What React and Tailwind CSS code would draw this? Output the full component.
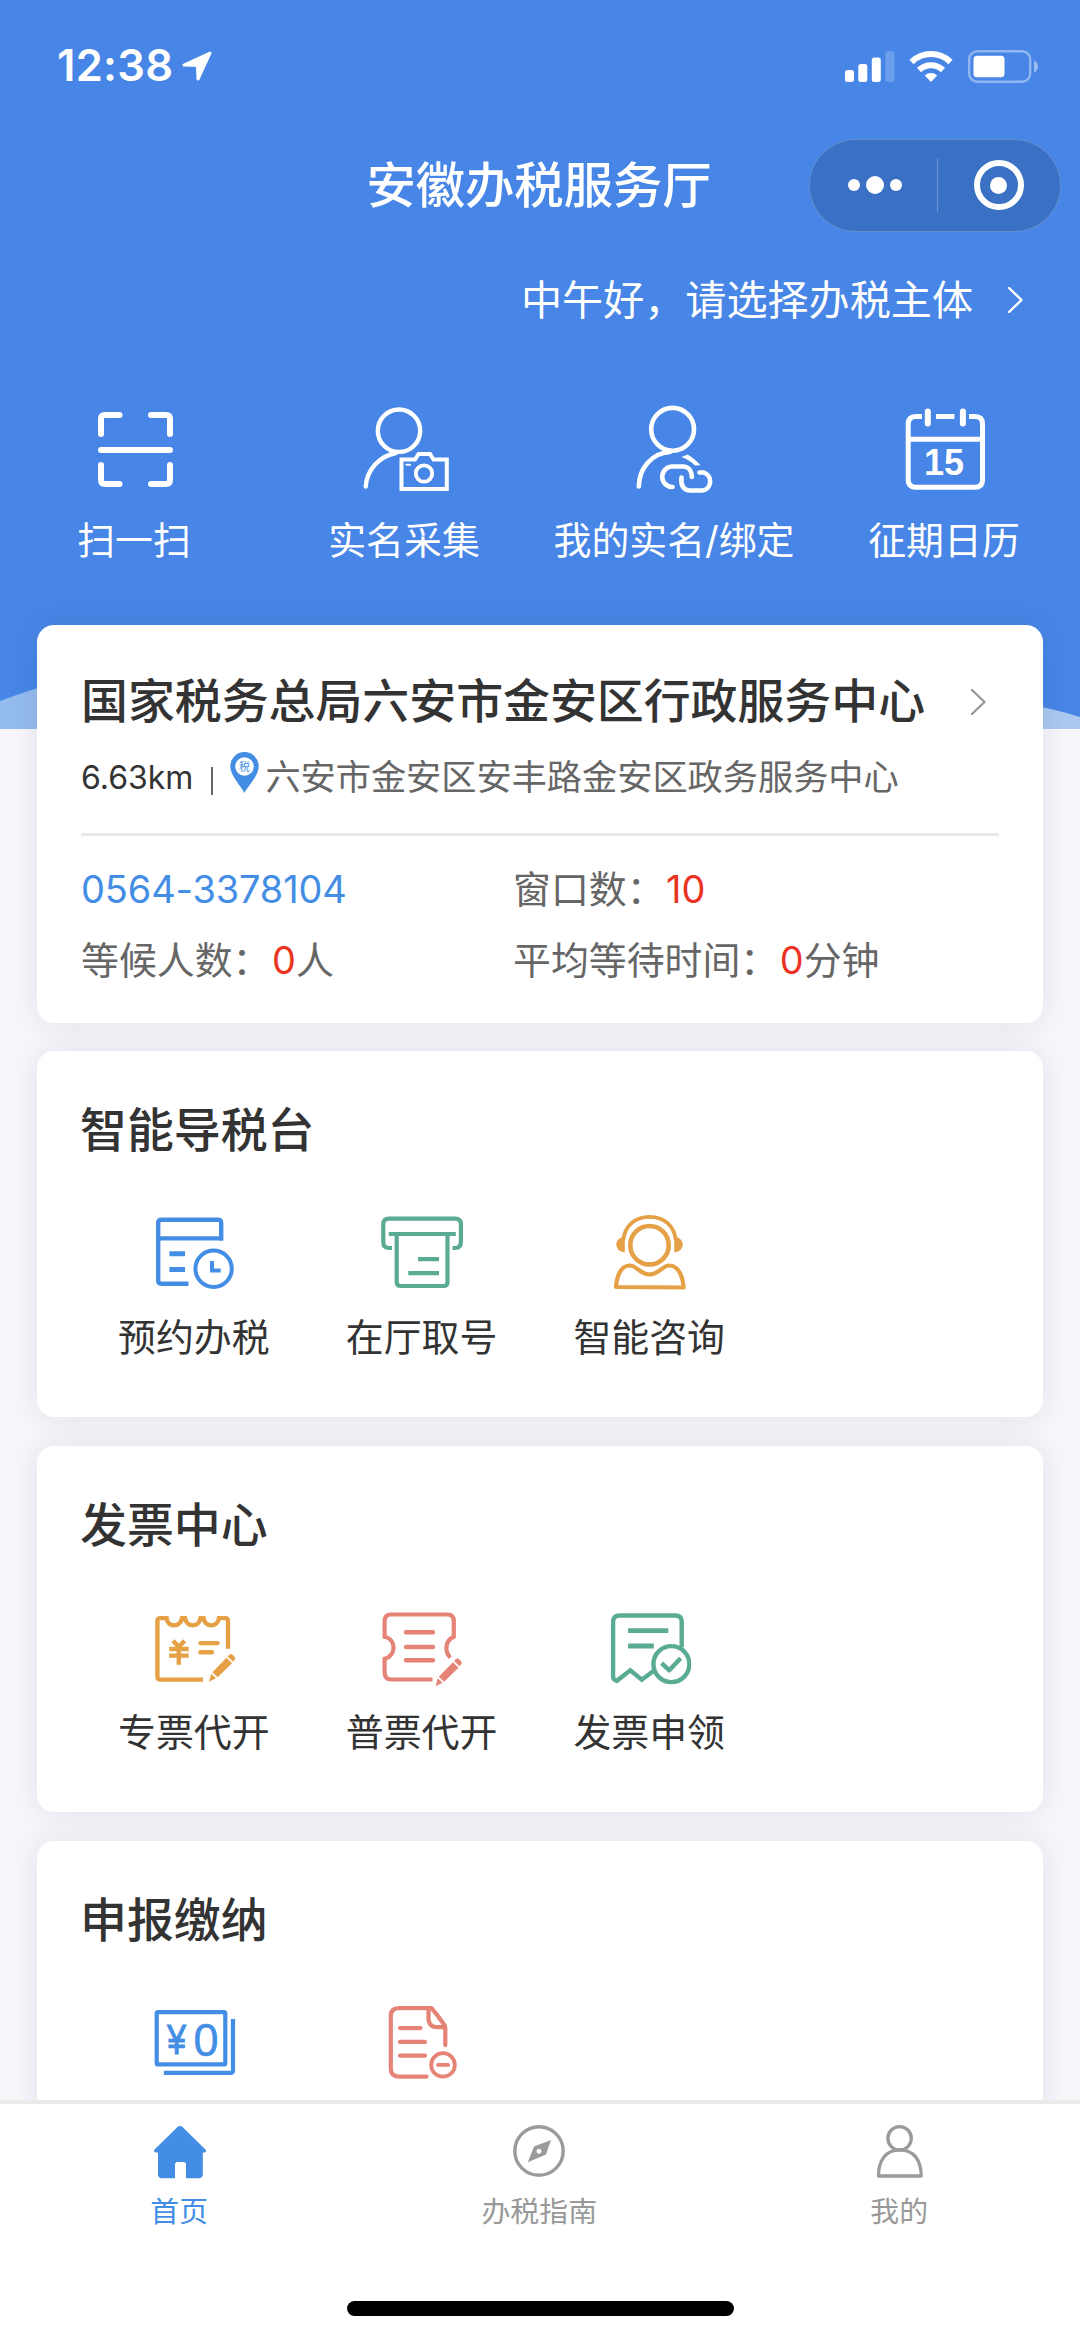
import React from "react";

const BLUE = "#438ee4";
const GREEN = "#5aab94";
const ORANGE = "#e6a045";
const RED = "#e58377";

function Chevron({ className }) {
  return (
    <svg viewBox="0 0 18 30" className={className} fill="none" stroke="currentColor" strokeWidth="2.400" strokeLinecap="round" strokeLinejoin="round">
      <path d="M3 3 L15.500 15 L3 27" />
    </svg>
  );
}

function StatusBar() {
  return (
    <div className="flex h-[132px] items-center justify-between pl-[57px] pr-[41px] text-white">
      <div className="flex items-center gap-[9px]">
        <span className="font-[Inter] text-[43.500px] font-semibold leading-none tracking-[0.300px]">12:38</span>
        <svg viewBox="0 0 30 30" className="h-[30px] w-[30px]" fill="#fff" stroke="#fff" strokeWidth="3" strokeLinejoin="round">
          <path d="M28 2 L2 14 L15.500 14.500 L16 28 Z" />
        </svg>
      </div>
      <div className="flex items-center">
        <svg viewBox="0 0 50 32" className="h-[32px] w-[50px]" fill="#fff">
          <rect x="0" y="20" width="9" height="12" rx="2.500" />
          <rect x="13.300" y="14" width="9" height="18" rx="2.500" />
          <rect x="26.800" y="7.500" width="9" height="24.500" rx="2.500" />
          <rect x="40.500" y="1" width="9" height="31" rx="2.500" opacity="0.2" />
        </svg>
        <svg viewBox="0 0 44 32" className="ml-[14px] h-[32px] w-[44px]" fill="none" stroke="#fff" strokeWidth="6">
          <path d="M2.500 12 A28 28 0 0 1 41.500 12" />
          <path d="M10 20 A17.500 17.500 0 0 1 34 20" />
          <path d="M15.800 25.500 A9 9 0 0 1 28.200 25.500 L22 32 Z" fill="#fff" stroke="none" />
        </svg>
        <svg viewBox="0 0 71 33" className="ml-[15px] h-[33px] w-[71px]">
          <rect x="1.200" y="1.200" width="61" height="30.600" rx="8" fill="none" stroke="#fff" strokeOpacity="0.4" strokeWidth="2.400" />
          <rect x="5.500" y="5.800" width="31" height="21.400" rx="3.500" fill="#fff" />
          <path d="M66 10.500 Q70 12.500 70 16.500 Q70 20.500 66 22.500 Z" fill="#fff" fillOpacity="0.45" />
        </svg>
      </div>
    </div>
  );
}

function TitleBar() {
  return (
    <div className="grid h-[106px] grid-cols-[1fr_auto_1fr] items-center">
      <div />
      <h1 className="-ml-[2px] mt-[2px] whitespace-nowrap text-[49.300px] font-medium leading-none text-white">安徽办税服务厅</h1>
      <div className="mr-[19px] flex h-[93px] w-[252px] items-center justify-self-end rounded-full border border-white/20 bg-[#3a71c4]">
        <div className="flex flex-1 items-center justify-center gap-[6px] pl-[4px]">
          <span className="h-[12px] w-[12px] rounded-full bg-white" />
          <span className="h-[18px] w-[18px] rounded-full bg-white" />
          <span className="h-[12px] w-[12px] rounded-full bg-white" />
        </div>
        <div className="h-[54px] w-px bg-white/25" />
        <div className="flex flex-1 items-center justify-center">
          <span className="flex h-[50px] w-[50px] items-center justify-center rounded-full border-[6px] border-white">
            <span className="h-[17px] w-[17px] rounded-full bg-white" />
          </span>
        </div>
      </div>
    </div>
  );
}

function ScanIcon() {
  return (
    <svg viewBox="87 402 96 96" className="h-[96px] w-[96px]" fill="none" stroke="#fff" strokeWidth="6" strokeLinecap="round">
      <path d="M101 434 V419 Q101 415 105 415 H119.500" />
      <path d="M151 415 H166 Q170 415 170 419 V434" />
      <path d="M170 465 V480 Q170 484 166 484 H151" />
      <path d="M119.500 484 H105 Q101 484 101 480 V465" />
      <path d="M101 450 H170" />
    </svg>
  );
}

function CameraUserIcon() {
  return (
    <svg viewBox="357 402 96 96" className="h-[96px] w-[96px]" fill="none" stroke="#fff" strokeWidth="4.400" strokeLinecap="round">
      <circle cx="399" cy="430.700" r="21.200" />
      <path d="M396 453 C380 456 367 469 365.700 486.500" />
      <path d="M401.500 459.500 H415 L418.500 454 H430 L433.500 459.500 H446.800 V489 H401.500 Z" strokeWidth="4" />
      <circle cx="424" cy="473.500" r="8.200" strokeWidth="3.800" />
      <path d="M406.500 464.800 H410" strokeWidth="2" />
    </svg>
  );
}

function LinkUserIcon() {
  return (
    <svg viewBox="627 402 96 96" className="h-[96px] w-[96px]" fill="none" stroke="#fff" strokeWidth="4.600" strokeLinecap="round">
      <circle cx="672.600" cy="429.300" r="21.400" />
      <path d="M670 452 C652 453 639 468 638.800 486.500" />
      <path d="M672.500 487 H671.500 A10.300 10.300 0 0 1 671.500 466.500 H683 C688.500 466.500 691.800 471 691.800 477" />
      <path d="M681.500 477.500 C680.500 485 683.500 490.500 690 490.500 H702 A9.200 9.200 0 0 0 703.500 472.500 H699.500" />
      <path d="M681.500 457 L687.500 454.500 Q694 458 700.500 465.300 L695 465.500 Q689 459.500 681.500 457 Z" fill="#fff" stroke="none" />
    </svg>
  );
}

function CalendarIcon() {
  return (
    <svg viewBox="897 402 96 96" className="h-[96px] w-[96px]" fill="none" stroke="#fff" strokeWidth="5">
      <path d="M922 416.500 H916 Q908.200 416.500 908.200 424 V480 Q908.200 487.300 916 487.300 H975 Q982.500 487.300 982.500 480 V424 Q982.500 416.500 975 416.500 H969" />
      <path d="M936 416.500 H954.500" />
      <path d="M908.200 439.200 H982.500" />
      <path d="M927.800 411.500 V423.500 M962.900 411.500 V423.500" strokeWidth="6" strokeLinecap="round" />
      <text x="944" y="475" textAnchor="middle" fill="#fff" stroke="none" fontFamily="Liberation Sans, sans-serif" fontWeight="700" fontSize="36">15</text>
    </svg>
  );
}

const quickActions = [
  { label: "扫一扫", Icon: ScanIcon },
  { label: "实名采集", Icon: CameraUserIcon },
  { label: "我的实名/绑定", Icon: LinkUserIcon },
  { label: "征期日历", Icon: CalendarIcon },
];

function Header() {
  return (
    <header className="relative h-[729px] bg-[#4786e6]">
      <StatusBar />
      <TitleBar />
      <div className="flex h-[124px] items-center justify-end pr-[56px] text-white">
        <span className="mt-[2px] text-[41.100px] font-normal leading-none">中午好，请选择办税主体</span>
        <Chevron className="ml-[33px] h-[30px] w-[18px]" />
      </div>
      <div className="mt-[40px] grid grid-cols-4">
        {quickActions.map(({ label, Icon }) => (
          <div key={label} className="flex flex-col items-center">
            <Icon />
            <span className="mt-[18px] -ml-[2px] whitespace-nowrap text-[37.900px] font-normal leading-[48px] text-white">{label}</span>
          </div>
        ))}
      </div>
      <svg viewBox="0 0 1080 60" className="absolute bottom-0 left-0 h-[60px] w-[1080px]">
        <path d="M0 32 Q18 25 60 12 H540 V60 H0 Z" fill="#94bbee" />
        <path d="M1000 31 Q1045 37 1080 48 V60 H1000 Z" fill="#abc8f1" />
      </svg>
    </header>
  );
}

function Card({ className, children }) {
  return (
    <section className={`rounded-[17px] bg-white shadow-[0_0_30px_rgba(40,30,60,0.1)] ${className}`}>{children}</section>
  );
}

function PinIcon() {
  return (
    <svg viewBox="0 0 29 41" className="h-[41px] w-[29px]">
      <path d="M14.500 41 C11 34 0.300 24 0.300 14.300 A14.200 14.200 0 0 1 28.700 14.300 C28.700 24 18 34 14.500 41 Z" fill={BLUE} />
      <circle cx="14.500" cy="14.500" r="9.300" fill="#fff" />
      <text x="14.500" y="18.600" textAnchor="middle" fill={BLUE} fontFamily="Noto Sans CJK SC, sans-serif" fontSize="11">税</text>
    </svg>
  );
}

function OfficeCard() {
  return (
    <Card className="relative h-[397.700px] px-[44px] pt-[44px]">
      <div className="flex h-[64px] items-center justify-between pr-[12px]">
        <h2 className="whitespace-nowrap text-[46.900px] font-medium leading-[64px] text-[#333]">国家税务总局六安市金安区行政服务中心</h2>
        <Chevron className="mt-[2px] h-[30px] w-[18px] text-[#999]" />
      </div>
      <div className="mt-[22px] flex h-[44px] items-center whitespace-nowrap leading-[44px] text-[#666]">
        <span className="mt-[2px] text-[32px] text-[#333]">6.63km</span>
        <span className="ml-[18px] h-[28px] w-[2px] translate-y-[4px] bg-[#666]" />
        <span className="ml-[17px] -translate-y-[5px]"><PinIcon /></span>
        <span className="ml-[6px] text-[35.200px] font-normal">六安市金安区安丰路金安区政务服务中心</span>
      </div>
      <div className="mt-[33.500px] h-[3px] bg-[#e9e9ed]" />
      <div className="mt-[29.500px] grid grid-cols-[432px_1fr] gap-y-[23px] whitespace-nowrap text-[37.900px] font-normal leading-[48px] text-[#666]">
        <div className="tracking-[-0.100px] text-[#438ee4]">0564-3378104</div>
        <div>窗口数：<span className="ml-[1.500px] text-[#eb3323]">10</span></div>
        <div>等候人数：<span className="ml-[1.500px] text-[#eb3323]">0</span>人</div>
        <div>平均等待时间：<span className="ml-[1.500px] text-[#eb3323]">0</span>分钟</div>
      </div>
    </Card>
  );
}

function BookingIcon() {
  return (
    <svg viewBox="152 1211 84 84" className="h-[84px] w-[84px]" fill="none" stroke={BLUE} strokeWidth="4.400">
      <path d="M188.500 1283.700 H161.500 Q158.200 1283.700 158.200 1280.500 V1223 Q158.200 1219.700 161.500 1219.700 H218 Q221.200 1219.700 221.200 1223 V1240.500" />
      <path d="M158.200 1238.400 H223" />
      <path d="M169.400 1253.700 H185 M169.400 1269.400 H185" strokeWidth="5" />
      <circle cx="213.600" cy="1268.700" r="18.200" strokeWidth="4" />
      <path d="M212 1261 V1270.600 H220.700" strokeWidth="4" />
    </svg>
  );
}

function TicketMachineIcon() {
  return (
    <svg viewBox="380 1211 84 84" className="h-[84px] w-[84px]" fill="none" stroke={GREEN} strokeWidth="4.200">
      <path d="M392 1248 H389 Q383.300 1248 383.300 1242 V1224 Q383.300 1218.600 389 1218.600 H455 Q460.900 1218.600 460.900 1224 V1242 Q460.900 1248 455 1248 H452.500" />
      <path d="M388.800 1234 H455.800" />
      <path d="M396.700 1234 V1282 Q396.700 1286 400.700 1286 H443.500 Q447.500 1286 447.500 1282 V1234" />
      <path d="M418 1259.200 H439 M408.300 1273.200 H439" />
    </svg>
  );
}

function ConsultIcon() {
  return (
    <svg viewBox="607.200 1211 84 84" className="h-[84px] w-[84px]" fill="none" stroke={ORANGE} strokeWidth="4.200" strokeLinejoin="round">
      <path d="M623.500 1240 C625 1226 635 1216.800 649.700 1216.800 C664.500 1216.800 674.500 1226 676 1240" strokeWidth="3.800" />
      <path d="M625 1236 V1252.500 Q616.500 1251 616.500 1244.500 Q616.500 1238.500 625 1236 Z M674.500 1236 V1252.500 Q683 1251 683 1244.500 Q683 1238.500 674.500 1236 Z" fill={ORANGE} stroke="none" />
      <circle cx="649.700" cy="1245.200" r="19.200" strokeWidth="4.600" />
      <path d="M616.200 1287 C617 1276 621 1265.500 630 1265.500 C637 1265.500 640 1274.500 649.700 1274.500 C659.500 1274.500 662.500 1265.500 669.400 1265.500 C678.500 1265.500 683 1276 683.800 1287.500 Z" />
    </svg>
  );
}

function Pencil({ transform }) {
  return (
    <g transform={transform} fill="currentColor" stroke="none">
      <path d="M-1.500 0.500 L0.700 -7.500 L5.500 -3 Z" />
      <path d="M1.800 -9 L16 -23.500 L21.500 -18 L7.200 -4 Z" />
      <path d="M17.200 -24.700 L19 -26.700 Q20.500 -28 22 -26.500 L24 -24.500 Q25.500 -23 24.300 -21.800 L22.500 -19.500 Z" />
    </g>
  );
}

function SpecialInvoiceIcon() {
  return (
    <svg viewBox="152 1605.700 84 84" className="h-[84px] w-[84px] text-[#e6a045]" fill="none" stroke="currentColor" strokeWidth="4.400">
      <path d="M203 1679.300 H160.500 Q157.400 1679.300 157.400 1676 V1621 Q157.400 1617.800 160.500 1617.800 H166.500 C167.500 1627.500 180.500 1627.500 182 1617.800 H185 C186.500 1627.500 199 1627.500 200.500 1617.800 H203.500 C205 1627.500 217.500 1627.500 219 1617.800 H225 Q228 1617.800 228 1621 V1648.500" />
      <path d="M200.500 1642.800 H217.500 M200.500 1651.900 H212" strokeLinecap="round" />
      <path d="M173 1640.500 L178.800 1646.500 L184.600 1640.500 M178.800 1646.500 V1664.500 M169.200 1648.700 H188.700 M169.200 1655.300 H188.700" />
      <Pencil transform="translate(210.500 1681)" />
    </svg>
  );
}

function GeneralInvoiceIcon() {
  return (
    <svg viewBox="380 1605.700 84 84" className="h-[84px] w-[84px] text-[#e58377]" fill="none" stroke="currentColor" strokeWidth="4.200">
      <path d="M432.500 1679.200 H391 Q384.600 1679.200 384.600 1672 V1658.500 C396.500 1655.500 396.500 1639 384.600 1636.500 V1621 Q384.600 1614.200 391 1614.200 H447.500 Q453.800 1614.200 453.800 1621 V1636.500 C445.500 1640 444 1650.500 450.300 1657.300" />
      <path d="M406 1632 H433 M406 1646.700 H433 M406 1659.900 H433" strokeWidth="4.400" strokeLinecap="round" />
      <Pencil transform="translate(437 1685.500)" />
    </svg>
  );
}

function ReceiveInvoiceIcon() {
  return (
    <svg viewBox="607.200 1605.700 84 84" className="h-[84px] w-[84px]" fill="none" stroke={GREEN} strokeWidth="4.400">
      <path d="M681.900 1647 V1621.500 Q681.900 1615.200 675.500 1615.200 H620 Q613.300 1615.200 613.300 1621.500 V1677 Q614 1680 617 1680.500 L630.500 1670 L642 1679.500 L654 1670.500" />
      <path d="M628.300 1630.400 H668.500 M628.300 1645.700 H654" strokeWidth="4.800" />
      <circle cx="671.600" cy="1663.800" r="18" />
      <path d="M661.800 1662.800 L669.500 1670 L680.800 1658" strokeLinejoin="round" />
    </svg>
  );
}

function ZeroDeclareIcon() {
  return (
    <svg viewBox="152 2000.400 84 84" className="h-[84px] w-[84px]" fill="none" stroke={BLUE} strokeWidth="4.200">
      <rect x="156.700" y="2011.500" width="68.600" height="52.300" rx="1.500" />
      <path d="M233 2018.500 V2070 Q233 2072.300 230.500 2072.300 H163.800" />
      <text transform="translate(167.300 2053.700) scale(0.78 1)" fill={BLUE} stroke={BLUE} strokeWidth="1.200" fontFamily="Liberation Sans, sans-serif" fontSize="43">¥</text>
      <text transform="translate(193.500 2055) scale(0.98 1)" fill={BLUE} stroke={BLUE} strokeWidth="0.500" fontFamily="Liberation Sans, sans-serif" fontSize="46">0</text>
    </svg>
  );
}

function CancelDocIcon() {
  return (
    <svg viewBox="380 2000.400 84 84" className="h-[84px] w-[84px]" fill="none" stroke={RED} strokeWidth="4.200" strokeLinecap="round" strokeLinejoin="round">
      <path d="M426.500 2076 H399 Q390.800 2076 390.800 2068 V2015.500 Q390.800 2007.500 399 2007.500 H431.500 Q438 2015 444.500 2024.500 Q445.300 2026 445.300 2028 V2044.500" />
      <path d="M428.500 2009 V2019 Q429.500 2026.500 437 2026.600 H444.500" />
      <path d="M400 2027.500 H420.500 M400 2041.300 H425 M400 2055 H425" />
      <circle cx="443" cy="2064.300" r="11.800" strokeWidth="3.800" />
      <path d="M438 2064.300 H448.200" strokeWidth="3.800" />
    </svg>
  );
}

const services = [
  {
    title: "智能导税台",
    items: [
      { label: "预约办税", Icon: BookingIcon },
      { label: "在厅取号", Icon: TicketMachineIcon },
      { label: "智能咨询", Icon: ConsultIcon },
    ],
  },
  {
    title: "发票中心",
    items: [
      { label: "专票代开", Icon: SpecialInvoiceIcon },
      { label: "普票代开", Icon: GeneralInvoiceIcon },
      { label: "发票申领", Icon: ReceiveInvoiceIcon },
    ],
  },
  {
    title: "申报缴纳",
    items: [
      { label: "", Icon: ZeroDeclareIcon },
      { label: "", Icon: CancelDocIcon },
    ],
  },
];

function ServiceCard({ title, items }) {
  return (
    <Card className="relative h-[365.900px] shrink-0 px-[43px] pt-[47px]">
      <h2 className="text-[46.900px] font-medium leading-[64px] text-[#333]">{title}</h2>
      <div className="mt-[49px] grid grid-cols-[repeat(4,227.700px)]">
        {items.map(({ label, Icon }, i) => (
          <div key={i} className="flex flex-col items-center">
            <Icon />
            <span className="mt-[17.700px] text-[37.900px] font-normal leading-[48px] text-[#333]">{label}</span>
          </div>
        ))}
      </div>
    </Card>
  );
}

function HomeIcon() {
  return (
    <svg viewBox="152 2124 56 56" className="h-[56px] w-[56px]" fill={BLUE}>
      <path d="M177.500 2127 Q180 2125 182.500 2127 L205 2149 Q207.500 2152 204.500 2152.500 H202.800 V2174 Q202.800 2178.300 198.500 2178.300 H186 V2164.500 Q186 2162 183.500 2162 H177.500 Q175 2162 175 2164.500 V2178.300 H162 Q158 2178.300 158 2174 V2152.500 H156 Q152.500 2152 155 2149 Z" />
    </svg>
  );
}

function CompassIcon() {
  return (
    <svg viewBox="512 2124 56 56" className="h-[56px] w-[56px]">
      <circle cx="539" cy="2151" r="24.200" fill="none" stroke="#9b9b9b" strokeWidth="3.400" />
      <path fillRule="evenodd" d="M551 2140 L546 2154.500 L527.800 2162.300 L534 2146.500 Z M539 2148.700 A2.500 2.500 0 1 0 539.010 2148.700 Z" fill="#9b9b9b" />
    </svg>
  );
}

function MeIcon() {
  return (
    <svg viewBox="872 2124 56 56" className="h-[56px] w-[56px]" fill="none" stroke="#9b9b9b" strokeWidth="3.300" strokeLinejoin="round">
      <circle cx="899.600" cy="2138.300" r="11.700" />
      <path d="M878.500 2176 C878.500 2160 886 2149.800 899.800 2149.800 C913.500 2149.800 921.200 2160 921.200 2176 Z" />
    </svg>
  );
}

const tabs = [
  { label: "首页", Icon: HomeIcon, color: "text-[#438ee4]" },
  { label: "办税指南", Icon: CompassIcon, color: "text-[#999]" },
  { label: "我的", Icon: MeIcon, color: "text-[#999]" },
];

function TabBar() {
  return (
    <nav className="relative flex h-[239px] shrink-0 flex-col items-center border-t-[4px] border-[#ebebeb] bg-white">
      <div className="grid w-full grid-cols-3 pt-[20px]">
        {tabs.map(({ label, Icon, color }) => (
          <div key={label} className="flex flex-col items-center">
            <Icon />
            <span className={`-ml-[1.500px] mt-[14px] text-[28.900px] font-normal leading-[36px] ${color}`}>{label}</span>
          </div>
        ))}
      </div>
      <div className="mt-[71px] h-[15px] w-[387px] rounded-full bg-black" />
    </nav>
  );
}

export default function App() {
  return (
    <div className="flex h-[2339px] w-[1080px] flex-col overflow-hidden bg-[#f6f6fb] font-[Inter,'Noto_Sans_CJK_SC',sans-serif]">
      <main className="h-[2100px] shrink-0 overflow-hidden">
        <Header />
        <div className="-mt-[104px] flex flex-col gap-[28.800px] px-[37px]">
          <OfficeCard />
          {services.map((s) => (
            <ServiceCard key={s.title} {...s} />
          ))}
        </div>
      </main>
      <TabBar />
    </div>
  );
}
